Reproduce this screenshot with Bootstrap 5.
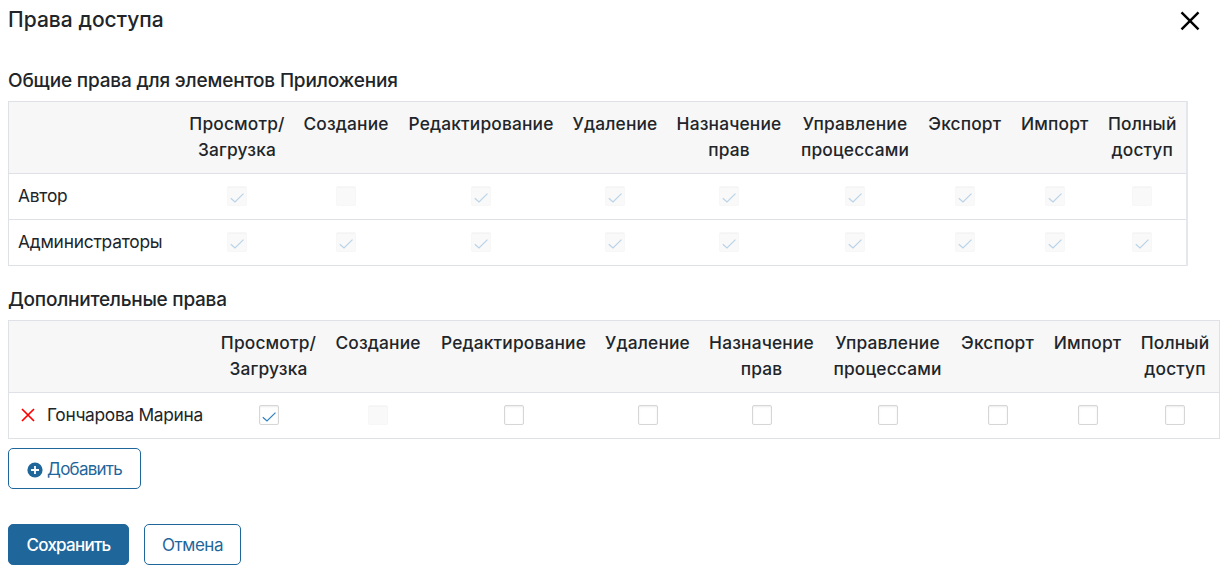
<!DOCTYPE html>
<html lang="ru">
<head>
<meta charset="utf-8">
<meta name="viewport" content="width=device-width, initial-scale=1">
<title>Права доступа</title>
<link href="https://cdn.jsdelivr.net/npm/bootstrap@5.3.0/dist/css/bootstrap.min.css" rel="stylesheet">
<style>
body{font-family:Inter,"Liberation Sans",sans-serif;font-size:17.33px;line-height:26px;color:#212529;overflow:hidden}
.dialog{padding:0 0 0 8px}
.dialog-head{height:40px;padding-right:20px}
.dialog-title{font-size:21px;font-weight:500;line-height:40px;letter-spacing:.03px}
.section-title{font-size:19px;font-weight:500;line-height:28px;letter-spacing:-.17px}
.s1{margin-top:27px}
.s2{margin-top:20px;letter-spacing:-.25px}
.rights{table-layout:fixed;border-collapse:separate;border-spacing:0;border:1px solid #dee2e6;border-bottom:0;margin:0}
.rights>:not(caption)>*>*{padding:0;border:0;border-bottom:1px solid #dee2e6;vertical-align:middle;text-align:center;line-height:26px;background:#fff;color:#212529;box-shadow:none;white-space:nowrap}
.rights>thead>tr>th{height:72px;padding-top:9px;vertical-align:top;font-weight:500;letter-spacing:.17px;background:#f7f7f7}
.rights>tbody>tr>td{height:46px;padding-bottom:2px}
.rights>tbody>tr>td:first-child{text-align:left;padding-left:9px}
.rights-common{width:1180px;margin-top:6px;border-right:2px solid #e4e8ee}
.rights-extra{width:1212px;margin-top:6px}
.rights tbody{letter-spacing:-.2px}
.rights-extra tbody{letter-spacing:-.3px}
.chk{display:block;width:20px;height:20px;margin:0 auto;border:1px solid #d6d6d6;border-radius:2px;box-shadow:inset 0 1px 2px rgba(0,0,0,.08);background:#fff}
.chk.off{background:#f9f9f9;border-color:#f7f7f7;box-shadow:inset 0 1px 1px rgba(0,0,0,.025)}
.chk svg{display:block;width:18px;height:18px;fill:none;stroke:#2f80c0;stroke-width:1.2}
.chk.off svg{stroke:#b9d3e8}
.act{height:41px;border:1px solid #1f679b;border-radius:5px;color:#1f679b;background:#fff;font-size:17px;line-height:26px;padding:0;letter-spacing:-.45px}
.act.add{letter-spacing:-.75px}
.act.save{background:#1f679b;color:#fff;font-weight:500;letter-spacing:-.75px}
</style>
</head>
<body>
<svg class="d-none"><symbol id="tick" viewBox="0 0 18 18"><path d="M2.8 11.2 7 15 15.5 6.6"/></symbol></svg>
<main class="dialog">
<header class="dialog-head d-flex justify-content-between align-items-center">
<h1 class="dialog-title m-0">Права доступа</h1>
<svg style="margin-top:2px" width="20" height="20" viewBox="0 0 20 20" fill="none" stroke="#000" stroke-width="2.4"><path d="M1.5 1.3 18.5 18.3M18.5 1.3 1.5 18.3"/></svg>
</header>
<h2 class="section-title s1 mb-0">Общие права для элементов Приложения</h2>
<table class="table rights rights-common">
<colgroup><col style="width:171.5px"><col style="width:113px"><col style="width:105px"><col style="width:165px"><col style="width:103px"><col style="width:125px"><col style="width:127px"><col style="width:92.5px"><col style="width:87.5px"><col style="width:87.5px"></colgroup>
<thead><tr><th></th><th>Просмотр/<br>Загрузка</th><th>Создание</th><th>Редактирование</th><th>Удаление</th><th>Назначение<br>прав</th><th>Управление<br>процессами</th><th>Экспорт</th><th>Импорт</th><th>Полный<br>доступ</th></tr></thead>
<tbody>
<tr><td>Автор</td>
<td><span class="chk off"><svg><use href="#tick"/></svg></span></td>
<td><span class="chk off"></span></td>
<td><span class="chk off"><svg><use href="#tick"/></svg></span></td>
<td><span class="chk off"><svg><use href="#tick"/></svg></span></td>
<td><span class="chk off"><svg><use href="#tick"/></svg></span></td>
<td><span class="chk off"><svg><use href="#tick"/></svg></span></td>
<td><span class="chk off"><svg><use href="#tick"/></svg></span></td>
<td><span class="chk off"><svg><use href="#tick"/></svg></span></td>
<td><span class="chk off"></span></td></tr>
<tr><td>Администраторы</td>
<td><span class="chk off"><svg><use href="#tick"/></svg></span></td>
<td><span class="chk off"><svg><use href="#tick"/></svg></span></td>
<td><span class="chk off"><svg><use href="#tick"/></svg></span></td>
<td><span class="chk off"><svg><use href="#tick"/></svg></span></td>
<td><span class="chk off"><svg><use href="#tick"/></svg></span></td>
<td><span class="chk off"><svg><use href="#tick"/></svg></span></td>
<td><span class="chk off"><svg><use href="#tick"/></svg></span></td>
<td><span class="chk off"><svg><use href="#tick"/></svg></span></td>
<td><span class="chk off"><svg><use href="#tick"/></svg></span></td></tr>
</tbody>
</table>
<h2 class="section-title s2 mb-0">Дополнительные права</h2>
<table class="table rights rights-extra">
<colgroup><col style="width:203px"><col style="width:113px"><col style="width:106px"><col style="width:165px"><col style="width:103px"><col style="width:125px"><col style="width:127px"><col style="width:93px"><col style="width:87px"><col style="width:88px"></colgroup>
<thead><tr><th></th><th>Просмотр/<br>Загрузка</th><th>Создание</th><th>Редактирование</th><th>Удаление</th><th>Назначение<br>прав</th><th>Управление<br>процессами</th><th>Экспорт</th><th>Импорт</th><th>Полный<br>доступ</th></tr></thead>
<tbody>
<tr><td><div class="d-flex align-items-center"><svg class="me-2" style="width:14px;height:14px;margin-left:3px" viewBox="0 0 14 14" fill="none" stroke="#f00" stroke-width="1.7"><path d="m1 1 12 12M13 1 1 13"/></svg><span class="ps-1">Гончарова Марина</span></div></td>
<td><span class="chk"><svg><use href="#tick"/></svg></span></td>
<td><span class="chk off"></span></td>
<td><span class="chk"></span></td><td><span class="chk"></span></td><td><span class="chk"></span></td><td><span class="chk"></span></td><td><span class="chk"></span></td><td><span class="chk"></span></td><td><span class="chk"></span></td></tr>
</tbody>
</table>
<button class="btn act add d-flex align-items-center justify-content-center" style="width:133px;margin-top:9px"><svg class="me-1" style="margin-top:2px" width="16" height="16" viewBox="0 0 16 16"><circle cx="8" cy="8" r="7.6" fill="#1f679b"/><path d="M8 4v8M4 8h8" stroke="#fff" stroke-width="1.8"/></svg>Добавить</button>
<footer class="d-flex" style="margin-top:35px;gap:15px">
<button class="btn act save" style="width:121px">Сохранить</button>
<button class="btn act" style="width:97px">Отмена</button>
</footer>
</main>
<script src="https://cdn.jsdelivr.net/npm/bootstrap@5.3.0/dist/js/bootstrap.bundle.min.js"></script>
</body>
</html>
